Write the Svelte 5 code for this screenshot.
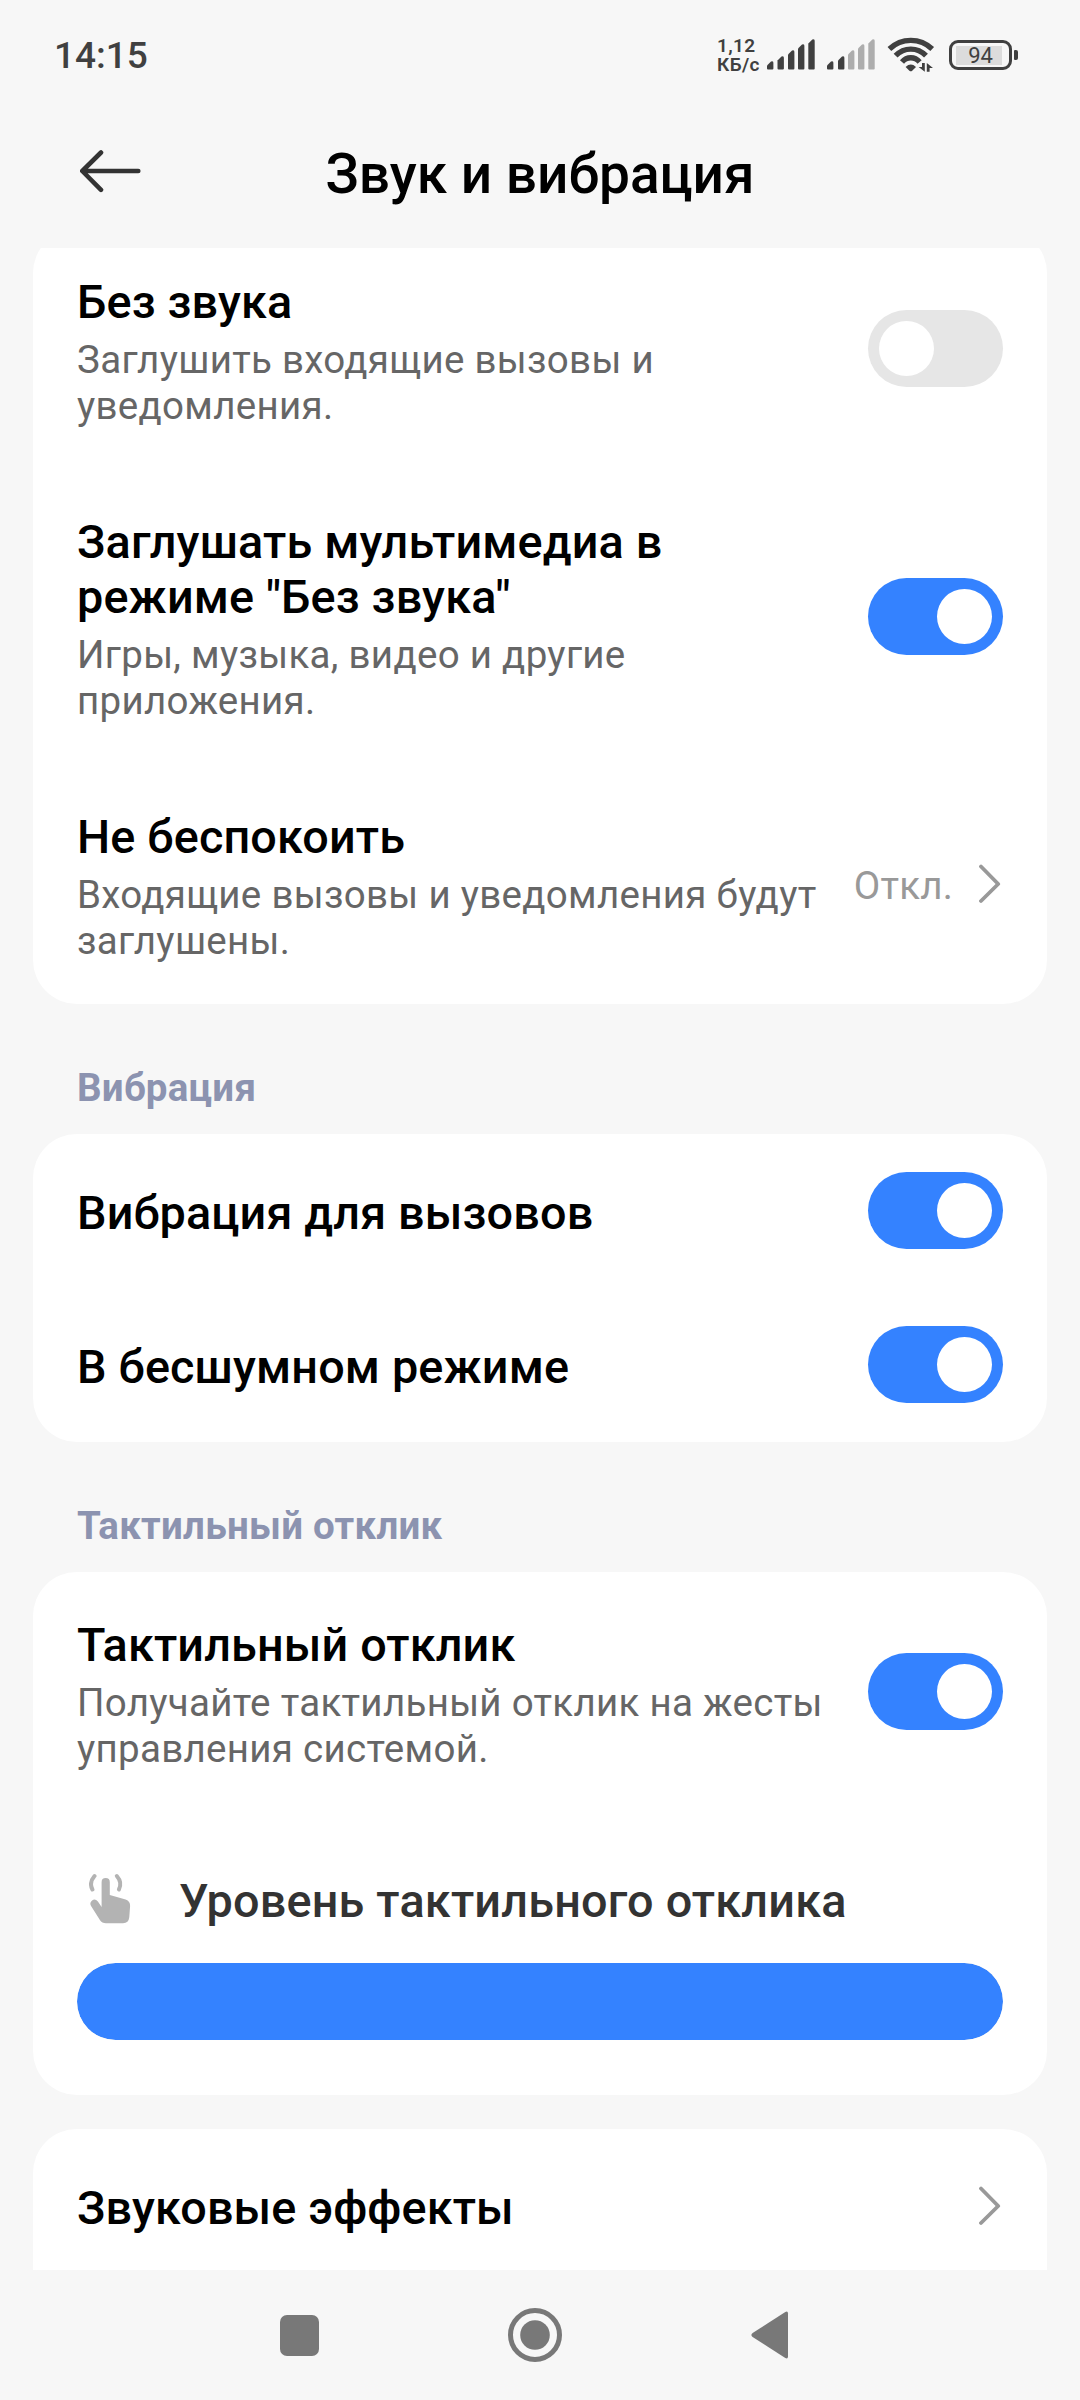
<script lang="ts">
  type Row = {
    id: string;
    title: string;
    summary?: string;
    value?: string;
    on?: boolean;
    tall?: boolean;
  };

  type Group = {
    heading?: string;
    rows: Row[];
    level?: number;
  };

  let groups: Group[] = [
    {
      rows: [
        { id: "silent", title: "Без звука", summary: "Заглушить входящие вызовы и уведомления.", on: false },
        {
          id: "mute-media",
          title: 'Заглушать мультимедиа в режиме "Без звука"',
          summary: "Игры, музыка, видео и другие приложения.",
          on: true,
          tall: true
        },
        { id: "dnd", title: "Не беспокоить", summary: "Входящие вызовы и уведомления будут заглушены.", value: "Откл." }
      ]
    },
    {
      heading: "Вибрация",
      rows: [
        { id: "vibrate-calls", title: "Вибрация для вызовов", on: true },
        { id: "vibrate-silent", title: "В бесшумном режиме", on: true }
      ]
    },
    {
      heading: "Тактильный отклик",
      rows: [
        {
          id: "haptic",
          title: "Тактильный отклик",
          summary: "Получайте тактильный отклик на жесты управления системой.",
          on: true
        }
      ],
      level: 100
    },
    {
      rows: [{ id: "effects", title: "Звуковые эффекты" }]
    }
  ];

  const barTops = [22, 17, 11, 5, 0];
  const firstSim = [0, 10.5, 21, 31, 41.3];
  const secondSim = [0, 11, 21, 31, 41.3];

  function barPath(x: number, top: number) {
    return `M${x} ${top + 4.5}L${x + 4} ${top + 0.6}Q${x + 6.4} ${top - 0.6} ${x + 6.4} ${top + 2}V29.5Q${x + 6.4} 30.5 ${x + 5.4} 30.5H${x + 1}Q${x} 30.5 ${x} 29.5Z`;
  }

  function toggle(row: Row) {
    row.on = !row.on;
    groups = groups;
  }
</script>

<div class="screen">
  <div class="status-bar">
    <span class="clock">14:15</span>
    <div class="status-icons">
      <div class="net-speed">
        <span>1,12</span>
        <span>КБ/с</span>
      </div>
      <svg class="signal" width="48" height="32" viewBox="0 0 48 32">
        {#each barTops as top, i}
          <path d={barPath(firstSim[i], top)} fill="#404040" />
        {/each}
      </svg>
      <svg class="signal second" width="48" height="32" viewBox="0 0 48 32">
        {#each barTops as top, i}
          <path d={barPath(secondSim[i], top)} fill={i < 2 ? "#404040" : "#adadad"} />
        {/each}
      </svg>
      <svg class="wifi" width="48" height="36" viewBox="0 0 48 36">
        <g fill="none" stroke="#404040" stroke-width="5.4">
          <path d="M2.4 12Q11.5 3.4 23.8 3.4T45.2 12" />
          <path d="M8.6 18.7Q15 12.1 23.8 12.1T39 18.7" />
          <path d="M15 24.9Q18.6 20.7 23.8 20.7T32.6 24.9" />
        </g>
        <path d="M18.6 30Q23.8 25.2 29 30L25.2 33.7Q23.8 34.8 22.4 33.7Z" fill="#404040" />
        <path d="M37.8 26V34.8L31.6 29.9H35V26ZM39.8 34.8V26L46 31H42.6V34.8Z" fill="#404040" />
      </svg>
      <div class="battery">
        <div class="battery-body"><span>94</span></div>
        <div class="battery-tip"></div>
      </div>
    </div>
  </div>

  <header class="title-bar">
    <button class="back" aria-label="Назад">
      <svg width="62" height="44" viewBox="0 0 62 44">
        <path d="M21 2.5L2.3 21L21 39.8M3 21H58.3" fill="none" stroke="#333" stroke-width="4.6" stroke-linecap="round" stroke-linejoin="round" />
      </svg>
    </button>
    <h1>Звук и вибрация</h1>
  </header>

  <main>
    {#each groups as group, g}
      {#if group.heading}
        <h2>{group.heading}</h2>
      {/if}
      <section
        class="card"
        class:first={g === 0}
        class:spaced={g > 0 && !group.heading}
        class:last={g === groups.length - 1}
      >
        {#each group.rows as row (row.id)}
          <div class="row" class:two-line={row.summary} class:tall={row.tall}>
            <div class="label" class:wide={row.id === "dnd" || row.id === "haptic"}>
              <div class="title">{row.title}</div>
              {#if row.summary}
                <div class="summary">{row.summary}</div>
              {/if}
            </div>
            {#if row.on !== undefined}
              <button
                class="switch"
                class:on={row.on}
                role="switch"
                aria-checked={row.on}
                aria-label={row.title}
                on:click={() => toggle(row)}
              >
                <span class="knob"></span>
              </button>
            {:else}
              <div class="more">
                {#if row.value}
                  <span class="value">{row.value}</span>
                {/if}
                <svg width="24" height="40" viewBox="0 0 24 40">
                  <path d="M2 2.5L19.2 20L2 37" fill="none" stroke="#999" stroke-width="3.8" stroke-linecap="round" stroke-linejoin="round" />
                </svg>
              </div>
            {/if}
          </div>
        {/each}

        {#if group.level !== undefined}
          <div class="level">
            <div class="level-label">
              <svg width="44" height="52" viewBox="0 0 44 52">
                <g fill="none" stroke="#b3b3b3" stroke-width="4" stroke-linecap="round">
                  <path d="M5.5 3Q-0.2 9.5 3.4 16.5" />
                  <path d="M27.8 3Q33.5 9.5 29.9 16.5" />
                </g>
                <path
                  d="M12.6 9.2Q12.6 5 16.7 5T20.8 9.2V22L36.6 26.4Q41.3 28 41.1 33L40.3 44Q39.7 50.2 34 50.2H17Q13 50.2 10.9 47L1.9 32.8Q0.3 29.6 3.1 27.4Q6.1 25.4 8.9 28.4L12.6 34Z"
                  fill="#b3b3b3"
                />
              </svg>
              <span>Уровень тактильного отклика</span>
            </div>
            <div class="track">
              <div class="fill" style="width: {group.level}%"></div>
            </div>
          </div>
        {/if}
      </section>
    {/each}
  </main>

  <nav>
    <svg width="39" height="41" viewBox="0 0 39 41">
      <rect width="39" height="41" rx="7" fill="#787878" />
    </svg>
    <svg width="54" height="54" viewBox="0 0 54 54">
      <circle cx="27" cy="27" r="24.5" fill="none" stroke="#787878" stroke-width="5" />
      <circle cx="27" cy="27" r="14.8" fill="#787878" />
    </svg>
    <svg width="38" height="48" viewBox="0 0 38 48">
      <path d="M34.3 0.9Q37 -0.4 37 2.6V45.4Q37 48.4 34.3 47.1L1.6 26Q-0.8 24 1.6 22Z" fill="#787878" />
    </svg>
  </nav>
</div>

<style>
  :global(body) {
    background: #f7f7f7;
  }

  .screen {
    display: flex;
    flex-direction: column;
    width: 1080px;
    height: 2400px;
    overflow: hidden;
    background: #f7f7f7;
    color: #000;
    font-family: Roboto, "Noto Sans", sans-serif;
  }

  button {
    border: 0;
    padding: 0;
    background: none;
    cursor: pointer;
  }

  svg {
    display: block;
    flex: none;
  }

  .status-bar {
    display: flex;
    justify-content: space-between;
    align-items: center;
    height: 110px;
    padding: 0 62px 0 54px;
    box-sizing: border-box;
    color: #404040;
  }

  .clock {
    font-size: 37px;
    font-weight: 500;
  }

  .status-icons {
    display: flex;
    align-items: center;
  }

  .net-speed {
    display: flex;
    flex-direction: column;
    width: 41px;
    margin-right: 9px;
    font-size: 19px;
    font-weight: 600;
    line-height: 19px;
    letter-spacing: 0.4px;
    white-space: nowrap;
  }

  .signal.second {
    margin-left: 12px;
  }

  .wifi {
    margin: 0 14px 0 12px;
  }

  .battery {
    display: flex;
    align-items: center;
    gap: 2px;
  }

  .battery-body {
    display: flex;
    align-items: center;
    justify-content: center;
    width: 63px;
    height: 30px;
    padding-top: 2px;
    box-sizing: border-box;
    border: 3.3px solid #404040;
    border-radius: 9px;
    background: linear-gradient(#dcdcdc, #dcdcdc) 4px center / 46px 19px no-repeat;
    font-size: 22px;
    line-height: 24px;
  }

  .battery-tip {
    width: 4px;
    height: 10px;
    border-radius: 1px 2px 2px 1px;
    background: #404040;
  }

  .title-bar {
    display: grid;
    grid-template-columns: 80px 1fr 80px;
    align-items: center;
    height: 138px;
    padding: 0 80px 14px;
    box-sizing: border-box;
  }

  h1 {
    margin: 4px 0 0;
    font-size: 55px;
    font-weight: 500;
    line-height: 64px;
    text-align: center;
  }

  main {
    height: 2022px;
    padding: 0 33px;
    overflow: hidden;
  }

  .card {
    border-radius: 44px;
    background: #fff;
  }

  .card.first {
    margin-top: -19px;
  }

  .card.spaced {
    margin-top: 34px;
  }

  /* runs on below the navigation bar */
  .card.last {
    padding-bottom: 154px;
  }

  h2 {
    margin: 0;
    padding: 61px 44px 23px;
    color: #8c93b0;
    font-size: 38.5px;
    font-weight: 700;
    line-height: 46px;
    letter-spacing: 0.27px;
  }

  .row {
    display: flex;
    align-items: center;
    justify-content: space-between;
    height: 154px;
    padding: 0 44px;
  }

  .row.two-line {
    height: 240px;
  }

  .row.two-line.tall {
    height: 295px;
  }

  .label {
    width: 640px;
    padding-top: 5px;
  }

  .label.wide {
    width: 760px;
  }

  .title {
    font-size: 46.75px;
    font-weight: 500;
    line-height: 55px;
    letter-spacing: 0.15px;
  }

  .summary {
    margin-top: 7px;
    color: #666;
    font-size: 38.5px;
    line-height: 46px;
    letter-spacing: 0.3px;
  }

  .switch {
    display: flex;
    flex: none;
    width: 135px;
    height: 77px;
    padding: 11px;
    margin-bottom: 2px;
    border-radius: 39px;
    background: #e6e6e6;
  }

  .tall .switch {
    margin-bottom: 0;
  }

  .switch.on {
    justify-content: flex-end;
    background: #3482ff;
  }

  .knob {
    width: 55px;
    height: 55px;
    border-radius: 50%;
    background: #fff;
  }

  .more {
    display: flex;
    align-items: center;
    gap: 26px;
  }

  .value {
    padding-top: 3px;
    color: #999;
    font-size: 38.5px;
    line-height: 46px;
    letter-spacing: 0.2px;
  }

  .level {
    padding: 55px 44px;
  }

  .level-label {
    display: flex;
    align-items: center;
    gap: 46px;
    height: 68px;
    padding-left: 12px;
    margin-bottom: 28px;
    color: #333;
    font-size: 46.75px;
    font-weight: 500;
    line-height: 55px;
    letter-spacing: 0.2px;
  }

  .level-label svg {
    margin-bottom: 5px;
  }

  .track {
    height: 77px;
    border-radius: 39px;
    background: #e6e6e6;
    overflow: hidden;
  }

  .fill {
    height: 100%;
    border-radius: 39px;
    background: #3482ff;
  }

  nav {
    display: flex;
    align-items: center;
    justify-content: space-between;
    height: 130px;
    padding: 0 291px 0 280px;
    box-sizing: border-box;
  }
</style>
